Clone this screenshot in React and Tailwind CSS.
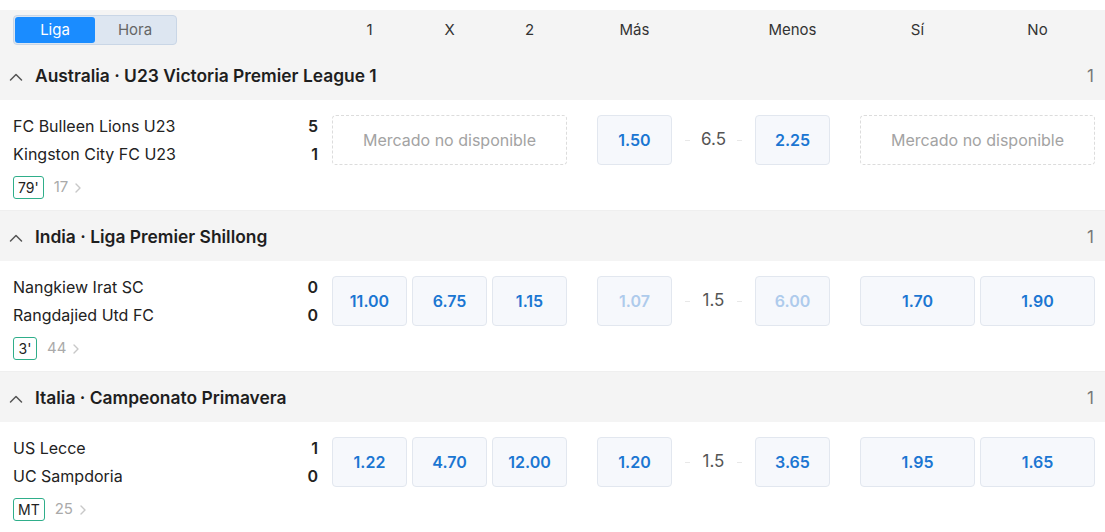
import React from "react";

const font = { fontFamily: "Inter, 'Noto Sans', sans-serif" };

function Chevron() {
  return (
    <svg width="16" height="16" viewBox="0 0 16 16" className="shrink-0">
      <path d="M2.5 11 L8 5.5 L13.5 11" fill="none" stroke="#555" strokeWidth="1.5" strokeLinecap="round" strokeLinejoin="round" />
    </svg>
  );
}

function Right() {
  return (
    <svg width="8" height="12" viewBox="0 0 8 12" className="ml-[6px]">
      <path d="M2 2 L6 6 L2 10" fill="none" stroke="#c8c8c8" strokeWidth="1.4" strokeLinecap="round" strokeLinejoin="round" />
    </svg>
  );
}

function Odd({ v, w = "w-[75px]", dim }) {
  return (
    <div className={`${w} h-[50px] rounded-[4px] border border-[#e2e7ef] bg-[#f6f8fc] flex items-center justify-center text-[16px] font-semibold ${dim ? "text-[#aecbec]" : "text-[#1b76d2]"}`}>
      {v}
    </div>
  );
}

function NA({ w }) {
  return (
    <div className={`${w} h-[50px] rounded-[4px] border border-dashed border-[#dcdcdc] flex items-center justify-center text-[16px] text-[#a3a3a3]`}>
      Mercado no disponible
    </div>
  );
}

function Line({ v }) {
  return (
    <div className="w-[83px] h-[50px] flex items-center justify-between px-[13px]">
      <span className="w-[5px] h-px bg-[#e8e8e8]" />
      <span className="text-[17px] text-[#555]">{v}</span>
      <span className="w-[5px] h-px bg-[#e8e8e8]" />
    </div>
  );
}

function LeagueHeader({ title }) {
  return (
    <div className="h-[50px] bg-[#f4f4f4] flex items-center pl-[8px] pr-[11px] pt-[3px]">
      <Chevron />
      <span className="ml-[11px] text-[17.4px] font-semibold text-[#1e1e1e]">{title}</span>
      <span className="ml-auto text-[17px] text-[#777]">1</span>
    </div>
  );
}

function Match({ m }) {
  return (
    <div className="h-[111px] bg-white flex border-b border-[#efefef]">
      <div className="w-[332px] pl-[13px] pr-[14px] pt-[12px]">
        <div className="flex justify-between h-[28px] items-center text-[16px] text-[#222]">
          <span>{m.t1}</span>
          <span className="font-semibold">{m.s1}</span>
        </div>
        <div className="flex justify-between h-[28px] items-center text-[16px] text-[#222]">
          <span>{m.t2}</span>
          <span className="font-semibold">{m.s2}</span>
        </div>
        <div className="mt-[8px] flex items-center">
          <span className="h-[23px] px-[4px] min-w-[24px] rounded-[3px] border border-[#2fae8a] flex items-center justify-center text-[14px] text-[#222]">{m.time}</span>
          <span className="ml-[10px] text-[15px] text-[#aaa]">{m.more}</span>
          <Right />
        </div>
      </div>
      <div className="pt-[15px] flex">
        {m.x12 ? (
          <div className="flex gap-[5px]">
            {m.x12.map((o, i) => <Odd key={i} v={o} />)}
          </div>
        ) : (
          <NA w="w-[235px]" />
        )}
        <div className="ml-[30px] flex">
          <Odd v={m.ou[0]} dim={m.ouDim} />
          <Line v={m.ou[1]} />
          <Odd v={m.ou[2]} dim={m.ouDim} />
        </div>
        <div className="ml-[30px]">
          {m.yn ? (
            <div className="flex gap-[5px]">
              {m.yn.map((o, i) => <Odd key={i} v={o} w="w-[115px]" />)}
            </div>
          ) : (
            <NA w="w-[235px]" />
          )}
        </div>
      </div>
    </div>
  );
}

export default function App() {
  const matches = [
    {
      league: "Australia · U23 Victoria Premier League 1",
      t1: "FC Bulleen Lions U23", t2: "Kingston City FC U23", s1: "5", s2: "1",
      time: "79'", more: "17", x12: null, ou: ["1.50", "6.5", "2.25"], yn: null,
    },
    {
      league: "India · Liga Premier Shillong",
      t1: "Nangkiew Irat SC", t2: "Rangdajied Utd FC", s1: "0", s2: "0",
      time: "3'", more: "44", x12: ["11.00", "6.75", "1.15"], ou: ["1.07", "1.5", "6.00"], ouDim: true, yn: ["1.70", "1.90"],
    },
    {
      league: "Italia · Campeonato Primavera",
      t1: "US Lecce", t2: "UC Sampdoria", s1: "1", s2: "0",
      time: "MT", more: "25", x12: ["1.22", "4.70", "12.00"], ou: ["1.20", "1.5", "3.65"], yn: ["1.95", "1.65"],
    },
  ];
  const hdr = ["1", "X", "2"];
  return (
    <div className="w-[1105px] h-[532px] overflow-hidden bg-white pt-[10px]" style={font}>
      <div className="h-[40px] bg-[#f4f4f4] flex items-center">
        <div className="w-[332px] pl-[13px]">
          <div className="w-[164px] h-[30px] rounded-[4px] border border-[#c9d6e6] bg-[#dde6f1] p-[1px] flex">
            <div className="w-[80px] rounded-[3px] bg-[#1a8cff] text-white text-[15px] flex items-center justify-center">Liga</div>
            <div className="w-[80px] text-[#666] text-[15px] flex items-center justify-center">Hora</div>
          </div>
        </div>
        <div className="flex text-[15px] text-[#333]">
          <div className="flex gap-[5px]">
            {hdr.map((t) => <div key={t} className="w-[75px] text-center">{t}</div>)}
          </div>
          <div className="ml-[30px] w-[75px] text-center">Más</div>
          <div className="w-[83px]" />
          <div className="w-[75px] text-center">Menos</div>
          <div className="ml-[30px] w-[115px] text-center">Sí</div>
          <div className="ml-[5px] w-[115px] text-center">No</div>
        </div>
      </div>
      {matches.map((m, i) => (
        <div key={i}>
          <LeagueHeader title={m.league} />
          <Match m={m} />
        </div>
      ))}
    </div>
  );
}
